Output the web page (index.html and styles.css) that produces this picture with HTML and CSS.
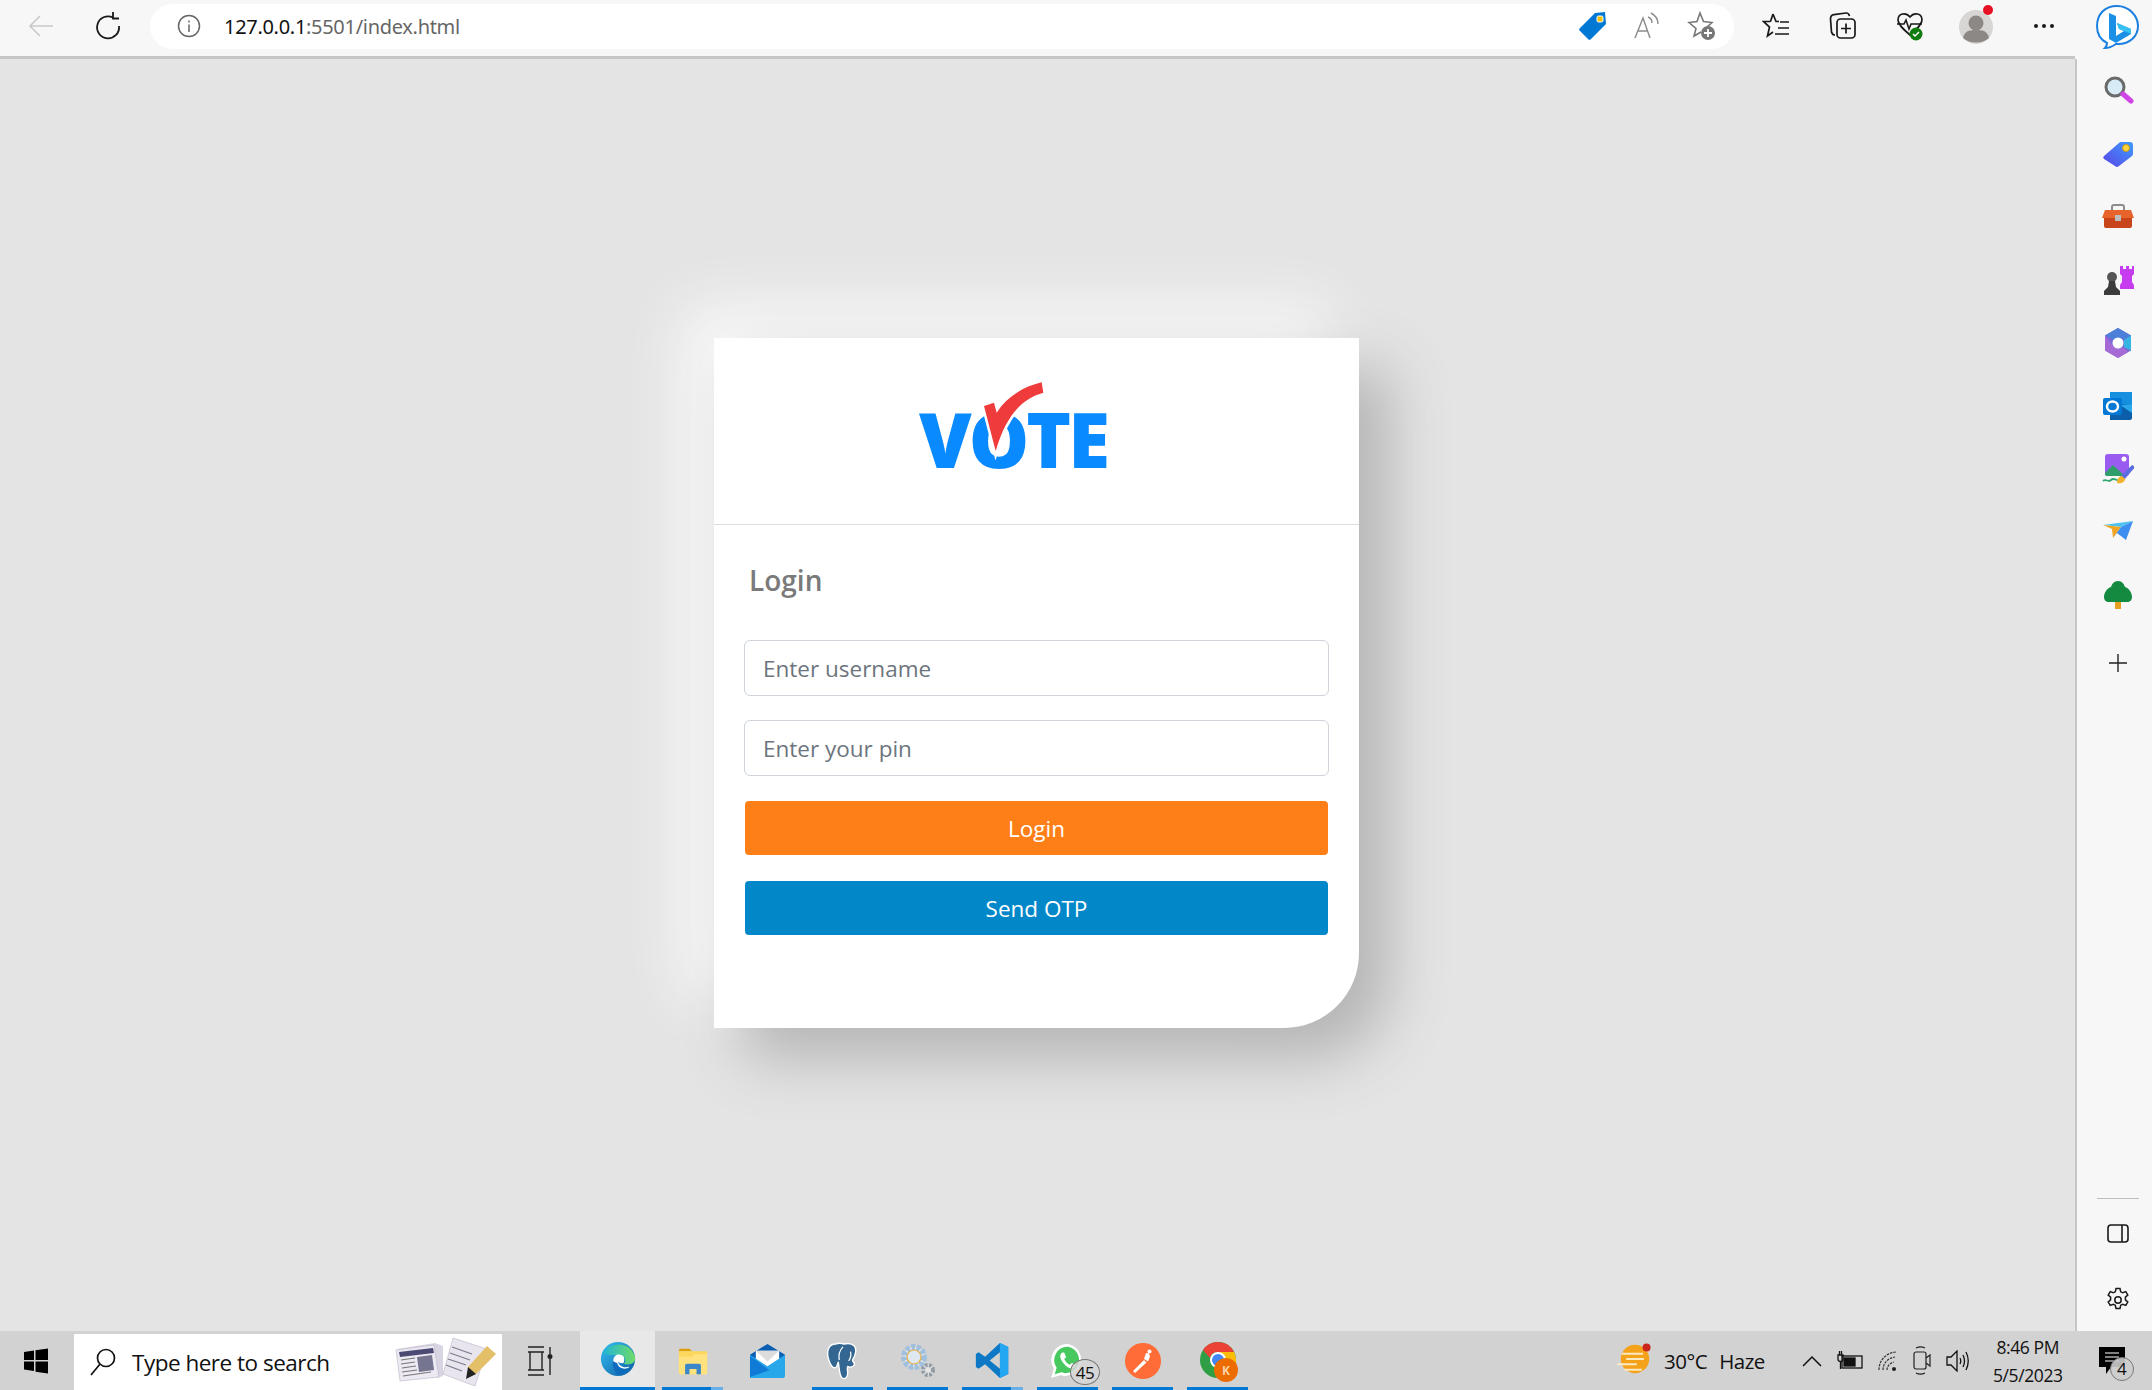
FILE: index.html
```html
<!DOCTYPE html>
<html>
<head>
    <title>Login</title>
    <link rel="stylesheet" href="styles.css">
</head>
<body>

<div class="window">
    <div class="browser">
        <div class="topbar">
            <span class="tool"><svg width="26" height="26" viewBox="0 0 26 26" fill="none" stroke="#c9c9c9" stroke-width="1.6"><path d="M25 13H2M12 3L2 13l10 10"/></svg></span>
            <span class="tool"><svg width="28" height="28" viewBox="0 0 28 28" fill="none" stroke="#1a1a1a" stroke-width="1.8"><path d="M19 5.500A11 11 0 1 0 25 14"/><path d="M19 0v6.500h6"/></svg></span>
            <div class="address">
                <svg class="info" width="24" height="24" viewBox="0 0 24 24" fill="none" stroke="#666" stroke-width="1.5"><circle cx="12" cy="12" r="10.5"/><path d="M12 10.500V18M12 6.500v2"/></svg>
                <span class="url">127.0.0.1<span class="url-rest">:5501/index.html</span></span>
                <div class="address-tools">
                    <svg width="28" height="32" viewBox="0 0 28 32"><path d="M1 18L16 3l10-1 1 12-15 15a2 2 0 0 1-3 0L1 21a2 2 0 0 1 0-3z" fill="#0078d4"/><rect x="18" y="6" width="6" height="6" rx="1.5" fill="#f4c20d" stroke="#fff"/></svg>
                    <svg width="28" height="30" viewBox="0 0 28 30" fill="none" stroke="#8a8a8a" stroke-width="1.4"><path d="M2 27L10 7l7 20M5 20h10"/><path d="M15 6c3 1 4 3 4 6M18 2c4 2 7 5 7 11"/></svg>
                    <svg width="30" height="30" viewBox="0 0 30 30"><path d="M14 21l-7 4 2-7.500-7-6 8-1L13 2l3.500 8.500 8.500 1-5 4.500" fill="none" stroke="#777" stroke-width="1.6"/><circle cx="21" cy="22" r="7" fill="#777"/><path d="M21 18v8M17 22h8" stroke="#fff" stroke-width="1.8"/></svg>
                </div>
            </div>
            <span class="tool"><svg width="28" height="28" viewBox="0 0 28 28" fill="none" stroke="#1a1a1a" stroke-width="1.7"><path d="M11 2l3 7.500h3M8.500 9.500H1.500l6 5.500-2 9 5.500-4M11 2L8.500 9.500"/><path d="M18 10h9M16 16h11M13 22h14"/></svg></span>
            <span class="tool"><svg width="28" height="30" viewBox="0 0 28 30" fill="none" stroke="#1a1a1a" stroke-width="1.7"><path d="M6 24c-2 0-3-1-3.500-3L1.500 8C1.500 5 3 4 5 3.700L17 2c2-.2 3 1 3.500 3"/><rect x="8" y="8" width="18" height="19" rx="3.500"/><path d="M17 12.500v10M12 17.500h10"/></svg></span>
            <span class="tool"><svg width="28" height="30" viewBox="0 0 28 30"><path d="M14 6C10 1 2 2 2 9c0 4 4 8 12 15 8-7 12-11 12-15 0-7-8-8-12-3z" fill="none" stroke="#1a1a1a" stroke-width="1.7"/><path d="M1 13h7l2-4 3 9 2-5h11" fill="#f7f7f7" stroke="#1a1a1a" stroke-width="1.600"/><circle cx="20" cy="23" r="6.500" fill="#107c10"/><path d="M17 23l2 2 4-4" fill="none" stroke="#fff" stroke-width="1.500"/></svg></span>
            <span class="tool"><svg width="38" height="44" viewBox="0 0 38 44"><circle cx="18" cy="23" r="17" fill="#d8d6d4"/><circle cx="18" cy="19" r="7.500" fill="#8b8886"/><path d="M5 34c2-8 7-8 13-8s11 0 13 8c-7 6-19 6-26 0z" fill="#8b8886"/><circle cx="30" cy="6" r="5" fill="#e81123"/></svg></span>
            <span class="tool"><svg width="22" height="6" viewBox="0 0 22 6" fill="#1a1a1a"><circle cx="3" cy="3" r="2"/><circle cx="11" cy="3" r="2"/><circle cx="19" cy="3" r="2"/></svg></span>
        </div>

        <div class="page">
            <div class="card">
                <div class="card-header">
                    <div class="logo">
                        <span class="logo-text">VOTE</span>
                        <svg class="logo-check" width="240" height="120" viewBox="0 0 720 360">
                            <path d="M287 243L252 108l30-10 8 30C320 80 370 50 425 37l5 31C370 85 320 130 287 243z" fill="#fff" stroke="#fff" stroke-width="15"/>
                            <path d="M287 243L252 108l30-10 8 30C320 80 370 50 425 37l5 31C370 85 320 130 287 243z" fill="#ef3b3b"/>
                        </svg>
                    </div>
                </div>
                <div class="card-body">
                    <h5 class="title">Login</h5>
                    <input class="field" type="text" placeholder="Enter username">
                    <input class="field" type="password" placeholder="Enter your pin">
                    <button class="btn btn-orange">Login</button>
                    <button class="btn btn-blue">Send OTP</button>
                </div>
            </div>
        </div>
    </div>

    <div class="sidebar">
        <div class="bing">
            <svg width="46" height="46" viewBox="0 0 46 46"><path d="M23 2C11 2 3 10 3 22c0 8 4 14 10 17 0 2-1 4-2 5 4 0 8-2 11-4h2c12 0 20-8 20-18S35 2 23 2z" fill="#fff" stroke="#1b7fe0" stroke-width="2"/><path d="M15 9l7 3v20l8-5-5-2-2-6 14 6v5l-15 9-7-4z" fill="#1c8fe6"/><path d="M23 19l14 6v5l-7-3-5-2z" fill="#35c1f1"/></svg>
        </div>
        <div class="side-list">
            <svg width="32" height="32" viewBox="0 0 32 32"><circle cx="13" cy="12" r="9" fill="#d6ebf6" stroke="#6a6a6a" stroke-width="3"/><path d="M21 19l8 7" stroke="#cf45e5" stroke-width="5" stroke-linecap="round"/></svg>
            <svg width="32" height="32" viewBox="0 0 32 32"><defs><linearGradient id="tagG" x1="1" y1="0" x2="0" y2="1"><stop offset="0" stop-color="#3d9bff"/><stop offset="1" stop-color="#5a46e6"/></linearGradient></defs><path d="M2 18L17 5a3 3 0 0 1 2-1h9a3 3 0 0 1 3 3v9a3 3 0 0 1-1 2L17 28a3 3 0 0 1-4 0L2 21a2 2 0 0 1 0-3z" fill="url(#tagG)"/><circle cx="24" cy="10" r="3.500" fill="#ffd23c" stroke="#c99a18"/></svg>
            <svg width="32" height="32" viewBox="0 0 32 32"><path d="M10 10V6a2 2 0 0 1 2-2h8a2 2 0 0 1 2 2v4" fill="none" stroke="#8c8c8c" stroke-width="2"/><path d="M3 9h26l3 8H0z" fill="#e8622c"/><path d="M2 17h28v8a2 2 0 0 1-2 2H4a2 2 0 0 1-2-2z" fill="#c8451c"/><rect x="13" y="14" width="6" height="6" fill="#bdbdbd"/></svg>
            <svg width="32" height="32" viewBox="0 0 32 32"><path d="M18 2h3v3h3V2h3v3h3V2h2v8l-2 2v6l2 3v4H18v-4l2-3v-6l-2-2z" fill="#c63df0"/><circle cx="10" cy="13" r="5" fill="#555"/><path d="M7 17h6l1 6 4 4v4H2v-4l4-4z" fill="#3b3b3b"/></svg>
            <svg width="32" height="32" viewBox="0 0 32 32"><path d="M16 1l13 7.500v15L16 31 3 23.500v-15z" fill="#7a6ad8"/><path d="M3 8.500L16 1l13 7.500-7 4.500a7 7 0 0 0-10 0z" fill="#4b7fd9"/><path d="M22 13l7-4.500v15L22 20z" fill="#36b5e3"/><path d="M3 8.500v15L16 31l10-6-5-5a7 7 0 0 1-10-1z" fill="#a56ad6"/><circle cx="16" cy="16" r="5.500" fill="#fff"/></svg>
            <svg width="32" height="32" viewBox="0 0 32 32"><rect x="8" y="2" width="22" height="14" fill="#1490df"/><path d="M8 14h22v14a2 2 0 0 1-2 2H8z" fill="#0a5eaa"/><path d="M18 15l12 8v-9z" fill="#28a8ea"/><rect x="1" y="8" width="19" height="17" rx="2" fill="#0078d4"/><ellipse cx="10.500" cy="16.500" rx="5.500" ry="5" fill="none" stroke="#fff" stroke-width="2.400"/></svg>
            <svg width="32" height="32" viewBox="0 0 32 32"><rect x="3" y="1" width="24" height="22" rx="3" fill="#9a5cf0"/><circle cx="22" cy="6" r="2.500" fill="#fff"/><path d="M3 20l8-8 12 11H5a2 2 0 0 1-2-2z" fill="#2f9e6b"/><path d="M1 28c3-3 5 2 8-1s5 1 7 0" fill="none" stroke="#2fa96f" stroke-width="1.800"/><path d="M18 24l12-12 3 2-11 13z" fill="#5a6ce0"/><path d="M15 30c0-4 2-7 5-7l3 3c0 3-4 5-8 4z" fill="#f3b32a"/></svg>
            <svg width="32" height="32" viewBox="0 0 32 32"><path d="M1 9l30-4-12 6z" fill="#4fc3f0"/><path d="M1 9l9 4 1 9 8-11z" fill="#f3a521"/><path d="M31 5l-7 19-9-7-4 5 8-11z" fill="#3c8ef0"/></svg>
            <svg width="32" height="32" viewBox="0 0 32 32"><rect x="13" y="21" width="6" height="9" fill="#e8a020"/><path d="M16 2c4 0 6 3 7 6 4 1 7 6 7 10 0 3-2 5-5 5H7c-3 0-5-2-5-5 0-4 3-9 7-10 1-3 3-6 7-6z" fill="#138a3f"/></svg>
            <svg class="side-plus" width="20" height="20" viewBox="0 0 20 20" stroke="#222" stroke-width="1.400"><path d="M10 1v18M1 10h18"/></svg>
            <div class="side-bottom">
                <div class="side-line"></div>
                <svg width="22" height="20" viewBox="0 0 22 20" fill="none" stroke="#1a1a1a" stroke-width="1.600"><rect x="1" y="1" width="20" height="17" rx="3"/><path d="M15 1v17"/></svg>
                <svg width="26" height="26" viewBox="0 0 26 26" fill="none" stroke="#1a1a1a" stroke-width="1.500"><path d="M11 1.500h4l.7 3.300 2 1 3.100-1.200 2 3.400-2.400 2.200v2.600l2.400 2.200-2 3.400-3.100-1.200-2 1-.7 3.300h-4l-.7-3.300-2-1-3.100 1.200-2-3.400 2.400-2.200v-2.600L3.200 8l2-3.400 3.100 1.200 2-1z"/><circle cx="13" cy="13" r="3.200"/></svg>
            </div>
        </div>
    </div>
</div>

<div class="taskbar">
    <div class="task-start"><svg width="26" height="26" viewBox="0 0 26 26" fill="#000"><path d="M1 4l10-1.500V12H1zM12.500 2.300L25 .5V12H12.500zM1 13.500h10V23L1 21.500zM12.500 13.500H25v12l-12.500-1.800z"/></svg></div>
    <div class="task-search">
        <svg width="28" height="30" viewBox="0 0 28 30" fill="none" stroke="#111" stroke-width="1.700"><circle cx="17" cy="11" r="8.500"/><path d="M11 17L2 28"/></svg>
        <span class="search-text">Type here to search</span>
        <svg class="search-art" width="102" height="50" viewBox="0 0 102 50"><path d="M2 12l38-6 8 3v30l-6 2z" fill="#d8d4e2"/><path d="M1 13l38-5 5 32-39 4z" fill="#ece9f2" stroke="#b8b4c6" stroke-width=".6"/><path d="M4 15l34-4 1 5-34 4z" fill="#4a4a72"/><path d="M22 20l15-2 2 15-15 2z" fill="#75758f"/><path d="M6 23l14-2M6 27l14-2M7 31l14-2M7 35l15-2M8 39l28-4" stroke="#777" stroke-width="1.200"/><path d="M58 1l34 11-12 37-32-12z" fill="#e8e5ee" stroke="#b8b4c6" stroke-width=".6"/><path d="M57 10l20 7M55 16l20 7M53 22l18 6M51 28l16 6" stroke="#7a7a8c" stroke-width="1.100"/><path d="M73 30L92 9l9 8-20 20-8 3z" fill="#e3c067"/><path d="M73 30l8 7-10 5z" fill="#222"/></svg>
    </div>
    <div class="task-view"><svg width="26" height="30" viewBox="0 0 26 30" fill="none" stroke="#222" stroke-width="1.400"><path d="M1 1h16M1 6h16M3 6v18M15 6v18M1 24h16M1 29h16M23 1v7M23 13v16"/><circle cx="23" cy="10.500" r="1.800" fill="#222"/></svg></div>

    <div class="tile tile-active"><svg width="38" height="38" viewBox="0 0 40 40"><defs><linearGradient id="edgeG" x1="0" y1="0" x2="1" y2="1"><stop offset="0" stop-color="#35c1f1"/><stop offset="1" stop-color="#0c59a4"/></linearGradient><linearGradient id="edgeH" x1="0" y1="0" x2="1" y2="0"><stop offset="0" stop-color="#20b4d8"/><stop offset="1" stop-color="#6fdc68"/></linearGradient></defs><circle cx="20" cy="20" r="18" fill="url(#edgeG)"/><path d="M4 14C8 4 32 -2 38 18c1 7-6 9-12 7 3-3 2-8-4-9-8-1-13 1-18-2z" fill="url(#edgeH)"/><path d="M15 22c0-5 4-8 9-6 3 1 3 5 2 8-2 1-5 0-6-1 1 5 7 7 12 5-3 6-10 9-15 6-2-3-2-8-2-12z" fill="#fff"/><path d="M19 24c1 5 7 8 13 5-3 6-9 9-13 7-4-3-5-8-4-14 1 1 3 2 4 2z" fill="#0f6cbd"/></svg></div>
    <div class="tile tile-open tile-stack"><svg width="34" height="30" viewBox="0 0 36 34"><path d="M2 5a2 2 0 0 1 2-2h10l3 3h-15z" fill="#e0a100"/><path d="M2 6h32v24a2 2 0 0 1-2 2H4a2 2 0 0 1-2-2z" fill="#fcd75c"/><path d="M2 12h15l3-3h14v21a2 2 0 0 1-2 2H4a2 2 0 0 1-2-2z" fill="#ffe27d"/><path d="M9 32V22a2 2 0 0 1 2-2h14a2 2 0 0 1 2 2v10h-5v-6h-8v6z" fill="#3b87c9"/></svg></div>
    <div class="tile"><svg width="37" height="35" viewBox="0 0 38 36"><path d="M1 12L19 1l18 11v22H1z" fill="#0b5fb3"/><path d="M7 8h24v13L19 28 7 21z" fill="#fff"/><path d="M7 8h24L19 19z" fill="#dcdcdc"/><path d="M1 12l18 12 18-12v22a2 2 0 0 1-2 2H1z" fill="#28a8ea"/><path d="M1 35V13l20 15z" fill="#0f7bd6"/></svg></div>
    <div class="tile tile-open"><svg width="34" height="38" viewBox="0 0 36 40"><path d="M10 2C3 2 1 9 2 15c1 5 3 10 6 12 3 1 4-2 5-6 1 6 1 14 4 17 3 2 6-1 6-5 0-3-1-5 0-7 3 1 6 0 7-2 1-2-2-3-2-5 3-4 5-11 2-15-3-3-7-3-11-2-3-1-6-1-9 0z" fill="#336791" stroke="#fff" stroke-width="1.500"/><path d="M18 5c-3 3-5 8-4 14M26 10c1 4 0 7-2 10" fill="none" stroke="#fff" stroke-width="1.300"/></svg></div>
    <div class="tile tile-open"><svg width="36" height="36" viewBox="0 0 36 36"><circle cx="14" cy="14" r="10" fill="#dfe8f0" stroke="#9fc0de" stroke-width="6" stroke-dasharray="4 1.500"/><circle cx="14" cy="14" r="7" fill="none" stroke="#e9b04a" stroke-width="1.200"/><circle cx="28" cy="27" r="5" fill="#e4e4e4" stroke="#8f9aa3" stroke-width="4" stroke-dasharray="2.500 1.500"/></svg></div>
    <div class="tile tile-open tile-stack"><svg width="37" height="37" viewBox="0 0 36 40"><path d="M26 1l9 4.500v29L26 39 10 24l-7 5-3-2v-14l3-2 7 5z" fill="#0d79c6"/><path d="M26 1l9 4.500v29L26 39z" fill="#24a7f2"/><path d="M26 11L15 20l11 9z" fill="#d2d2d2"/></svg></div>
    <div class="tile tile-open">
        <svg width="36" height="38" viewBox="0 0 38 40"><path d="M19 2a17 17 0 0 0-15 26L1 38l10-3A17 17 0 1 0 19 2z" fill="#fff"/><path d="M19 5A14 14 0 0 0 7 27l-2 7 7-2A14 14 0 1 0 19 5z" fill="#48c95f"/><path d="M13 11c-2 1-3 4-1 8s6 8 10 9c3 0 5-2 5-4l-4-2-2 2c-3-1-5-4-6-6l2-2-2-5z" fill="#fff"/></svg>
        <span class="badge badge-wa">45</span>
    </div>
    <div class="tile tile-open"><svg width="36" height="36" viewBox="0 0 36 36"><circle cx="18" cy="18" r="18" fill="#ff6c37"/><path d="M8 28l11-11 2.500 2.500L10 30zM19 16l2-6 3 .5 1 3-2 5z" fill="#fff"/><circle cx="24.500" cy="8.500" r="2" fill="#fff"/></svg></div>
    <div class="tile tile-open">
        <svg class="chrome" width="36" height="36" viewBox="0 0 36 36"><circle cx="18" cy="18" r="18" fill="#2f9e44"/><path d="M18 0a18 18 0 0 1 16 10H18a8 8 0 0 0-8 6L3 8A18 18 0 0 1 18 0z" fill="#ea4335"/><path d="M34 10a18 18 0 0 1-2 19l-8-12c0-3-2-6-6-7z" fill="#fbbc05"/><circle cx="18" cy="18" r="8" fill="#fff"/><circle cx="18" cy="18" r="6" fill="#4285f4"/></svg>
        <span class="badge badge-chrome">K</span>
    </div>

    <div class="tray">
        <svg class="weather" width="36" height="32" viewBox="0 0 40 36"><circle cx="20" cy="18" r="16" fill="#f5a21b"/><path d="M5 12h24M10 18h20M0 24h22M8 30h20" stroke="#fde9c0" stroke-width="2.200"/><circle cx="33" cy="5" r="4.500" fill="#c9261c"/></svg>
        <span class="temp">30°C</span>
        <span class="haze">Haze</span>
        <svg class="tray-icon tray-chevron" width="20" height="12" viewBox="0 0 20 12" fill="none" stroke="#111" stroke-width="1.500"><path d="M1 11l9-9 9 9"/></svg>
        <svg class="tray-icon" width="26" height="20" viewBox="0 0 26 20" fill="none" stroke="#111" stroke-width="1.300"><rect x="5" y="5" width="20" height="12"/><rect x="7" y="7" width="11" height="8" fill="#111"/><path d="M1 4h5v4a2.500 2.500 0 0 1-5 0zM2.500 0v4M4.500 0v4M3.500 10v8"/></svg>
        <svg class="tray-icon" width="20" height="22" viewBox="0 0 20 22" fill="none" stroke="#333" stroke-width="1.200"><path d="M1 20C1 10 8 3 18 2M5 20c0-7 5-12 12-13M9 20c0-4 3-7 7-8" stroke-dasharray="2.500 1"/><circle cx="16" cy="19" r="1.500" fill="#111"/></svg>
        <svg class="tray-icon" width="18" height="30" viewBox="0 0 18 30" fill="none" stroke="#222" stroke-width="1.200"><rect x="1" y="6" width="12" height="17" rx="2"/><path d="M13 12l4-3v11l-4-3M3 2c3-1.500 6-1.500 9 0M3 27c3 1.500 6 1.500 9 0"/></svg>
        <svg class="tray-icon" width="24" height="22" viewBox="0 0 24 22" fill="none" stroke="#111" stroke-width="1.300"><path d="M1 7h4l6-6v20l-6-6H1zM14 8c1 2 1 4 0 6M17 5c2 4 2 8 0 12M20 2c3 6 3 12 0 18"/></svg>
        <div class="clock"><span>8:46 PM</span><span>5/5/2023</span></div>
        <div class="notify">
            <svg width="26" height="28" viewBox="0 0 26 28"><path d="M0 0h26v20H12l-5 7v-7H0z" fill="#000"/><path d="M6 6h14M6 10h14M6 14h14" stroke="#fff" stroke-width="1.200"/></svg>
            <span class="badge badge-notify">4</span>
        </div>
    </div>
</div>

</body>
</html>
```

FILE: styles.css
```css
* {
    box-sizing: border-box;
}

body {
    margin: 0;
    width: 2152px;
    height: 1390px;
    overflow: hidden;
    display: flex;
    flex-direction: column;
    font-family: "Open Sans", sans-serif;
    background-color: #e4e4e4;
}

.window {
    flex: 1;
    display: flex;
    min-height: 0;
}

.browser {
    flex: 1;
    display: flex;
    flex-direction: column;
}

/* browser toolbar */
.topbar {
    height: 59px;
    display: flex;
    align-items: center;
    gap: 27px;
    padding: 0 9px 4px 21px;
    background-color: #f7f7f7;
    border-bottom: 3px solid #c6c6c6;
}

.tool {
    width: 40px;
    height: 46px;
    display: flex;
    align-items: center;
    justify-content: center;
}

.address {
    width: 1584px;
    height: 45px;
    margin: 0 -5px;
    padding: 0 17px 0 27px;
    display: flex;
    align-items: center;
    background-color: #fff;
    border-radius: 23px;
}

.url {
    margin-left: 23px;
    font-family: "Noto Sans", sans-serif;
    font-size: 20px;
    letter-spacing: -0.3px;
    color: #111;
}

.url-rest {
    color: #666;
}

.address-tools {
    margin-left: auto;
    display: flex;
    align-items: center;
    gap: 26px;
}

/* login page */
.page {
    flex: 1;
    display: flex;
    justify-content: center;
    align-items: flex-start;
    padding: 279px 2px 0 0;
}

.card {
    width: 645px;
    height: 690px;
    background-color: #fff;
    border-bottom-right-radius: 75px;
    box-shadow: 30px 30px 60px #b4b4b4, -30px -30px 60px #fafafa;
}

.card-header {
    height: 187px;
    padding: 74px 0 0 205px;
    border-bottom: 1px solid #ddd;
}

.logo {
    position: relative;
    width: 200px;
}

.logo-text {
    display: block;
    font-family: "Open Sans", sans-serif;
    font-weight: 800;
    font-size: 76px;
    line-height: 54px;
    letter-spacing: -3px;
    color: #0a8aff;
}

.logo-check {
    position: absolute;
    left: -19px;
    top: -42px;
}

.card-body {
    padding: 0 30px;
    display: flex;
    flex-direction: column;
}

.title {
    margin: 33px 0 38px 5px;
    font-size: 28px;
    line-height: 44px;
    font-weight: 600;
    color: #7a7a7a;
}

.field {
    height: 56px;
    margin-bottom: 24px;
    padding: 0 18px;
    font-family: "Open Sans", sans-serif;
    font-size: 22.5px;
    color: #495057;
    border: 1px solid #ced4da;
    border-radius: 6px;
    background-color: #fff;
}

.field::placeholder {
    color: #6c757d;
    opacity: 1;
}

.btn {
    height: 54px;
    margin: 1px 1px 25px;
    font-family: "Open Sans", sans-serif;
    font-size: 22.5px;
    color: #fff;
    border: none;
    border-radius: 4px;
}

.btn-orange {
    background-color: #fe7f17;
}

.btn-blue {
    background-color: #0288c9;
}

/* edge side panel */
.sidebar {
    width: 77px;
    display: flex;
    flex-direction: column;
    background-color: #f7f7f7;
}

.bing {
    height: 59px;
    padding: 4px 0 0 19px;
}

.side-list {
    flex: 1;
    display: flex;
    flex-direction: column;
    align-items: center;
    gap: 31px;
    padding: 16px 0 18px 6px;
    border-left: 2px solid #c6c6c6;
}

.side-plus {
    margin-top: 11px;
}

.side-bottom {
    margin-top: auto;
    display: flex;
    flex-direction: column;
    align-items: center;
    gap: 25px;
}

.side-line {
    width: 42px;
    height: 1px;
    background-color: #bdbdbd;
}

.side-bottom svg:last-child {
    margin-top: 18px;
}

/* windows taskbar */
.taskbar {
    height: 59px;
    display: flex;
    align-items: center;
    background-color: #d2d2d2;
    color: #111;
}

.task-start {
    width: 74px;
    height: 100%;
    display: flex;
    align-items: center;
    padding-left: 23px;
}

.task-search {
    width: 428px;
    height: 56px;
    margin-top: 3px;
    padding: 0 5px 0 15px;
    display: flex;
    align-items: center;
    background-color: #fff;
}

.search-text {
    margin-left: 15px;
    font-size: 22.5px;
    letter-spacing: -0.5px;
}

.search-art {
    margin-left: auto;
}

.task-view {
    width: 78px;
    height: 100%;
    display: flex;
    align-items: center;
    justify-content: center;
    padding-right: 3px;
}

.tile {
    position: relative;
    width: 75px;
    height: 100%;
    display: flex;
    align-items: center;
    justify-content: center;
}

.tile-active {
    background-color: #e8e8e8;
    border-bottom: 3px solid #0078d4;
}

.tile-open::after {
    content: "";
    position: absolute;
    left: 7px;
    right: 7px;
    bottom: 0;
    height: 3px;
    background-color: #0078d4;
}

.tile-stack::before {
    content: "";
    position: absolute;
    right: 7px;
    bottom: 0;
    width: 12px;
    height: 3px;
    background-color: #6aaee6;
    z-index: 1;
}

.badge {
    position: absolute;
    display: flex;
    align-items: center;
    justify-content: center;
    border-radius: 50%;
}

.badge-wa {
    left: 40px;
    top: 28px;
    width: 30px;
    height: 26px;
    font-size: 17px;
    letter-spacing: -0.5px;
    color: #111;
    background-color: rgba(215, 215, 215, 0.85);
    border: 1px solid #777;
}

.chrome {
    margin-top: -1px;
}

.badge-chrome {
    left: 34px;
    top: 27px;
    width: 24px;
    height: 24px;
    font-size: 12px;
    font-weight: 700;
    color: #fbd2a8;
    background-color: #ec6c00;
}

.tray {
    flex: 1;
    height: 100%;
    display: flex;
    align-items: center;
    padding-left: 362px;
}

.weather {
    margin-top: -4px;
}

.temp {
    margin-left: 11px;
    font-size: 20.5px;
    letter-spacing: -0.5px;
}

.haze {
    margin-left: 12px;
    font-size: 20.5px;
    letter-spacing: -0.5px;
}

.tray-icon {
    margin-left: 15px;
}

.tray-chevron {
    margin-left: 37px;
}

.clock {
    width: 94px;
    margin-left: 11px;
    display: flex;
    flex-direction: column;
    align-items: center;
    gap: 6px;
    font-size: 17.5px;
    line-height: 22px;
    letter-spacing: -0.4px;
}

.notify {
    position: relative;
    margin: 0 0 0 24px;
    height: 28px;
}

.badge-notify {
    left: 11px;
    top: 10px;
    width: 24px;
    height: 24px;
    font-size: 17px;
    color: #111;
    background-color: rgba(205, 205, 205, 0.9);
    border: 1px solid #777;
}
```
